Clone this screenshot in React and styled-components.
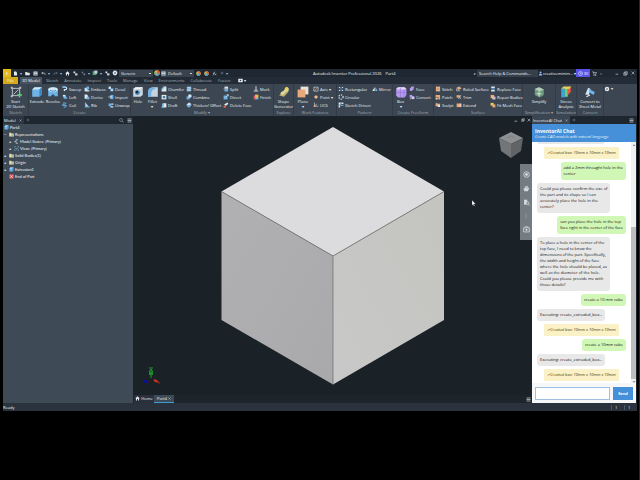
import React from "react";
import styled, { createGlobalStyle } from "styled-components";

const GlobalStyle = createGlobalStyle`
  * { box-sizing: border-box; }
  body { margin: 0; background: #000; }
  button, input, select { font: inherit; color: inherit; margin: 0; padding: 0; border: 0; background: none; outline: 0; }
  ul { margin: 0; padding: 0; list-style: none; }
`;

/* ---------- icons ---------- */

const B = "#6fb4e8";
const L = "#cfe6f7";
const W = "#e3e8ec";
const O = "#e8a878";
const P = "#b79af0";

const shapes = {
  sketch: <><path d="M4 4h12v12H4z" fill="none" stroke={W} strokeWidth="1.2" /><path d="M1 3h4M3 1v4M15 3h4M17 1v4M1 17h4M3 15v4M6 14l8-8" stroke={W} strokeWidth="1.2" /><path d="M16 11v8M12 15h8" stroke="#5fd07a" strokeWidth="2.4" /></>,
  extrude: <><path d="M2 6 6 2h12v12l-4 4H2z" fill={B} /><path d="M2 6 6 2h12l-4 4z" fill={L} /><path d="M14 6l4-4v12l-4 4z" fill="#3d85bd" /></>,
  revolve: <><path d="M2 8c0-8 16-8 16 0v9h-5c0-4-6-4-6 0H2z" fill={B} /><ellipse cx="10" cy="6" rx="8" ry="4" fill={L} /><path d="M5 7c2 2 8 2 10 0" stroke="#3d85bd" strokeWidth="1.5" fill="none" /></>,
  sweep: <><path d="M2 4h9c6 0 6 8 0 8H8v5" stroke={L} strokeWidth="4" fill="none" /><path d="M2 4h9" stroke={B} strokeWidth="5" /></>,
  loft: <><path d="M3 3h8l7 13H6z" fill={B} /><path d="M3 3h8v5H3z" fill={L} /></>,
  coil: <path d="M3 4c12-4 14 3 3 4s-3 6 4 4 8 3-4 6" stroke={B} strokeWidth="3" fill="none" />,
  emboss: <><path d="M2 6h10v12H2z" fill={L} /><path d="M8 2h9v9H8z" fill={B} /><path d="M10 14h8v4h-8z" fill={W} /></>,
  derive: <><path d="M2 2h8l3 4v10H2z" fill={W} /><path d="M9 9h9v9H9z" fill={B} /></>,
  rib: <><path d="M3 2h4v12h11v4H3z" fill={B} /><path d="M7 5l8 9H7z" fill={L} /></>,
  decal: <><path d="M2 2h8v8H2z" fill={L} /><path d="M8 8h10v10H8z" fill={B} /><circle cx="13" cy="13" r="3" fill={W} /></>,
  import: <><path d="M8 3h10v14H8z" fill={B} /><path d="M1 10h10M8 6l4 4-4 4" stroke={W} strokeWidth="2.4" fill="none" /></>,
  unwrap: <><path d="M2 5h9v9H2z" fill={B} /><path d="M11 5h7v4h-7zM8 14h10v4H8z" fill={L} /></>,
  hole: <><path d="M2 5 6 2h12v13l-4 3H2z" fill="#c9d3db" /><path d="M2 5 6 2h12l-4 3z" fill="#f1f4f6" /><circle cx="9" cy="11" r="4" fill="#3b83bb" /><circle cx="8" cy="10" r="2" fill="#16222d" /></>,
  fillet: <><path d="M2 18V9c0-6 7-7 9-7h7v16z" fill="#c9d3db" /><path d="M2 10c0-6 5-8 9-8l4 3c-5 0-8 3-8 8v5H2z" fill={B} /></>,
  chamfer: <><path d="M2 18V9l7-7h9v16z" fill={W} /><path d="M2 10l8-8h4L5 13z" fill={B} /></>,
  shell: <><path d="M2 3h16v15H2z" fill={W} /><path d="M6 7h8v7H6z" fill="#2f79b1" /></>,
  draft: <><path d="M2 18 6 4h12v14z" fill={W} /><path d="M2 18 6 4h4L8 18z" fill={B} /></>,
  thread: <><path d="M4 2h12v16H4z" fill={B} /><path d="M2 6l16-2M2 11l16-2M2 16l16-2" stroke={W} strokeWidth="2" /></>,
  combine: <><path d="M2 8h10v10H2z" fill={B} /><circle cx="13" cy="7" r="6" fill={L} /></>,
  thicken: <><path d="M2 8 10 2l8 5-8 6z" fill={L} /><path d="M2 8l8 5 8-6v5l-8 7-8-6z" fill={B} /></>,
  split: <><path d="M5 2h12v7H5z" fill={L} /><path d="M5 11h12v7H5z" fill={B} /><path d="M1 10h18" stroke={W} strokeWidth="1.4" /></>,
  direct: <><path d="M2 5h13v13H2z" fill={B} /><path d="M9 11l8-8M12 2h6v6" stroke={W} strokeWidth="2.2" fill="none" /></>,
  deleteface: <><path d="M4 8 14 2l4 4-9 7z" fill={W} /><path d="M2 12l7 1v6H2z" fill="#e0674b" /></>,
  mark: <><path d="M10 1v13" stroke={W} strokeWidth="3" /><path d="M2 17h16M6 12l4 4 4-4" stroke={W} strokeWidth="2.4" fill="none" /></>,
  finish: <><path d="M2 5h9v13H2z" fill="#db5454" /><path d="M7 2h11v11H7z" fill="#edb84c" /><path d="M8 13h10v5H8z" fill={B} /></>,
  shape: <><path d="M2 16 11 6l7 3-8 9z" fill="#b9b069" /><path d="M4 13c2-6 5-2 7-7s6-5 7-1-3 3-6 6-3 6-8 2z" fill="#dfd79c" /><circle cx="14" cy="4" r="2.5" fill="#f0d44a" /></>,
  plane: <><path d="M6 1h13v13H6z" fill="#e9e1db" /><path d="M1 6h13v13H1z" fill={O} /></>,
  axis: <><path d="M3 4h14v13H3z" fill="none" stroke={W} strokeWidth="2" /><path d="M5 16 16 4" stroke={O} strokeWidth="2.4" /></>,
  point: <><path d="M10 3l7 7-7 7-7-7z" fill={O} /><circle cx="10" cy="10" r="2" fill="#fff" /></>,
  ucs: <><path d="M5 2v12h13M5 14l8-8" stroke={W} strokeWidth="2" fill="none" /><circle cx="5" cy="14" r="3" fill={O} /></>,
  rect: <><path d="M3 3h4v4H3zM13 3h4v4h-4zM3 13h4v4H3zM13 13h4v4h-4z" fill={L} /><path d="M10 3v14M3 10h14" stroke={B} strokeWidth="2" strokeDasharray="2 2" /></>,
  circ: <circle cx="10" cy="10" r="7" fill="none" stroke={L} strokeWidth="4" strokeDasharray="4 3.3" />,
  driven: <><path d="M2 2h7v7H2zM11 2h7v5h-7zM2 11h5v7H2z" fill={L} /><path d="M9 9h4v4H9zM14 9h4v4h-4z" fill={B} /></>,
  mirror: <><path d="M9 3v14H1z" fill={W} /><path d="M11 3v14h8z" fill={B} /></>,
  box: <><path d="M2 5 5 2h11l3 3v10l-3 4H5l-3-3z" fill={P} /><path d="M2 5 5 2h11l3 3-4 1H4z" fill="#e2d5fb" /><path d="M9 3v16M15 6v12M2 11h17" stroke="#8f70d2" strokeWidth="1" /></>,
  face: <path d="M3 8 9 2h8l-2 9-6 6H3z" fill={P} />,
  convert: <><path d="M2 3h9v9H2z" fill={P} /><path d="M9 8h9v9H9z" fill="#dccdfb" /><path d="M3 16h5" stroke={W} strokeWidth="2.4" /></>,
  stitch: <><path d="M3 2h6v16H3zM11 2h6v16h-6z" fill={O} /><path d="M7 5h6M7 10h6M7 15h6" stroke="#fff" strokeWidth="1.6" /></>,
  patch: <><path d="M2 3h15v15h-6V10H2z" fill={O} /><path d="M2 12h7v6H2z" fill="#f7d6bd" /></>,
  sculpt: <><path d="M2 5c6-6 8 4 15 0v9c-6 5-9-3-15 2z" fill={O} /><circle cx="13" cy="13" r="4" fill={L} /></>,
  ruled: <><path d="M2 5 13 2l5 7-11 4z" fill={O} /><path d="M2 8v8h12" stroke={W} strokeWidth="2" fill="none" /></>,
  trim: <><path d="M2 4h9v8H2z" fill={O} /><path d="M8 17 17 3M10 4l6 13" stroke={W} strokeWidth="2" /></>,
  extend: <><path d="M2 5h9v12H2z" fill={O} /><path d="M11 5h7v12h-7z" fill="#f7d6bd" /></>,
  replace: <><path d="M4 2h12v5H4zM4 13h12v5H4z" fill={L} /><path d="M4 8h12v4H4z" fill={B} /></>,
  repair: <><path d="M2 3h12v11H2z" fill={O} /><path d="M8 9h10v9H8z" fill={W} /><path d="M10 13h6" stroke="#d65151" strokeWidth="2.4" /></>,
  mesh: <><path d="M2 3h10v9H2z" fill="#efd04c" /><path d="M8 8h10v10H8z" fill={O} /></>,
  simplify: <><path d="M3 5l7-3 8 4v9l-7 4-8-4z" fill="#6f9b7d" /><path d="M3 5l7-3 8 4-7 3z" fill="#b4cebb" /><path d="M6 13h8M10 9v8" stroke="#d4e3d8" strokeWidth="1.6" /></>,
  stress: <><path d="M2 4h6v15H2z" fill="#39a5df" /><path d="M8 3h5v15H8z" fill="#70cf79" /><path d="M13 2h5v8l-5 5z" fill="#e85b46" /><path d="M2 4l4-3h13l-4 4z" fill="#e6d35c" /></>,
  metal: <><path d="M2 14 7 3l4 2-3 10z" fill={L} /><path d="M8 5l10 5-2 5-7-4z" fill={B} /><path d="M4 18l6-3" stroke={W} strokeWidth="2" /></>,
  gear: <circle cx="10" cy="10" r="5" fill="none" stroke={W} strokeWidth="5" />,
  file: <path d="M4 2h8l4 4v12H4z" fill={W} />,
  folder: <path d="M1 4h7l2 3h9v10H1z" fill={W} />,
  save: <><path d="M2 2h16v16H2z" fill={W} /><path d="M6 2h8v5H6zM5 11h10v7H5z" fill="#737e89" /></>,
  undo: <path d="M8 4 3 8l5 5M3 8h9c5 0 5 6 4 8" stroke={W} strokeWidth="2.4" fill="none" />,
  redo: <path d="M12 4l5 4-5 5M17 8H8c-5 0-5 6-4 8" stroke="#75808a" strokeWidth="2.4" fill="none" />,
  home: <path d="M10 1 1 10h3v8h4v-6h4v6h4v-8h3z" fill={W} />,
  parts: <><path d="M2 2h7v7H2z" fill={W} /><path d="M8 9h10v9H8z" fill="#b9c3cb" /></>,
  faded: <path d="M3 3h6v6H3zM10 10h7v7h-7z" fill="#75808a" />,
  green: <><path d="M2 4h13v13H2z" fill="#5f987e" /><path d="M8 2h10v10H8z" fill="#bed8cb" /></>,
  ball: <><circle cx="10" cy="10" r="8" fill={W} /><path d="M5 5l10 10M15 5 5 15" stroke="#5d6974" strokeWidth="2" /></>,
  wheel: <><circle cx="10" cy="10" r="9" fill="#e9b940" /><path d="M10 10V1a9 9 0 0 1 8 13z" fill="#dd5252" /><path d="M10 10l8 4a9 9 0 0 1-14 2z" fill="#4aa5e3" /><path d="M10 10 4 16A9 9 0 0 1 3 5z" fill="#68b967" /></>,
  plus: <path d="M10 3v14M3 10h14" stroke="#a4aeb6" strokeWidth="2" />,
  fx: <><path d="M3 18c5 1 3-15 9-15M4 9h7" stroke={W} strokeWidth="2" fill="none" /><path d="M11 10l6 7M17 10l-6 7" stroke={W} strokeWidth="1.8" /></>,
  user: <><circle cx="10" cy="6" r="4" fill="#9cb5ef" /><path d="M3 18c0-9 14-9 14 0z" fill="#9cb5ef" /></>,
  cart: <><path d="M1 3h4l2 10h9l2-7H6" stroke={W} strokeWidth="2" fill="none" /><circle cx="8" cy="17" r="2" fill={W} /><circle cx="15" cy="17" r="2" fill={W} /></>,
  min: <path d="M3 16h13" stroke={W} strokeWidth="3" />,
  restore: <path d="M7 3h10v10H7zM3 7h10v10H3z" stroke={W} strokeWidth="2" fill="none" />,
  close: <path d="M3 3l14 14M17 3 3 17" stroke={W} strokeWidth="2.6" />,
  menu: <path d="M2 4h16M2 10h16M2 16h16" stroke={W} strokeWidth="2.6" />,
  search: <><circle cx="8" cy="8" r="6" fill="none" stroke="#aab4bc" strokeWidth="2" /><path d="M12 12l7 7" stroke="#aab4bc" strokeWidth="2" /></>,
  clock: <><circle cx="10" cy="10" r="8" fill="none" stroke="#fff" strokeWidth="2" /><path d="M10 5v6h5" stroke="#fff" strokeWidth="2" fill="none" /></>,
  media: <><path d="M1 3h18v14H1z" fill={W} /><circle cx="10" cy="10" r="3" fill="#39444f" /></>,
  states: <><path d="M8 3v14M8 3h8M8 17h8M2 10h6" stroke={W} strokeWidth="2.4" /><circle cx="5" cy="10" r="3" fill={B} /></>,
  view: <><path d="M2 7V2h5M13 2h5v5M18 13v5h-5M7 18H2v-5" stroke={B} strokeWidth="2" fill="none" /><path d="M6 8l4 5 4-5" stroke={W} strokeWidth="2" fill="none" /></>,
  yfolder: <><path d="M1 3h7l2 3h9v12H1z" fill="#e8dfae" /><path d="M9 9h8v7H9z" fill="#a3b99c" /></>,
  end: <><rect x="1" y="1" width="18" height="18" rx="4" fill="#e05858" /><path d="M6 6l8 8M14 6l-8 8" stroke="#fff" strokeWidth="3" /></>,
  orbit: <><circle cx="10" cy="10" r="8" fill="none" stroke="#d6dade" strokeWidth="2.4" /><circle cx="10" cy="10" r="4" fill="#d6dade" /></>,
  hand: <path d="M4 18 1 10l2-1 2 3V4h2v6l1-8h2v8l2-7h2l-1 8 3-4 2 1-4 10z" fill="#d6dade" />,
  zoomdoc: <><path d="M3 2h9v14H3z" fill="#d6dade" /><circle cx="13" cy="12" r="4" fill="#848c92" stroke="#d6dade" strokeWidth="2" /><path d="M16 15l3 4" stroke="#d6dade" strokeWidth="2" /></>,
  look: <path d="M10 3v14M5 8l5-5 5 5M5 12l5 5 5-5" stroke="#8f979d" strokeWidth="2" fill="none" />,
  camera: <><path d="M2 5h16v12H2z" fill="none" stroke="#d6dade" strokeWidth="2.4" /><circle cx="10" cy="11" r="3" fill="#d6dade" /><path d="M5 2h10" stroke="#d6dade" strokeWidth="2" /></>,
};

const Svg = styled.svg`
  width: ${(p) => p.$size}px;
  height: ${(p) => p.$size}px;
  flex: none;
  display: block;
`;

function Icon({ name, size = 6 }) {
  return (
    <Svg $size={size} viewBox="0 0 20 20" aria-hidden="true">
      {shapes[name]}
    </Svg>
  );
}

/* ---------- data ---------- */

const tabs = ["Sketch", "Annotate", "Inspect", "Tools", "Manage", "View", "Environments", "Collaborate", "Fusion"];

const groups = [
  { label: "Sketch", width: 26, big: [["sketch", "Start\n2D Sketch", 25]] },
  {
    label: "Create", width: 102,
    big: [["extrude", "Extrude", 16], ["revolve", "Revolve", 16]],
    cols: [
      [22, ["sweep", "Sweep"], ["loft", "Loft"], ["coil", "Coil"]],
      [24, ["emboss", "Emboss"], ["derive", "Derive"], ["rib", "Rib"]],
      [23, ["decal", "Decal"], ["import", "Import"], ["unwrap", "Unwrap"]],
    ],
  },
  {
    label: "Modify ▾", width: 143,
    big: [["hole", "Hole", 14], ["fillet", "Fillet\n▾", 15]],
    cols: [
      [25, ["chamfer", "Chamfer"], ["shell", "Shell"], ["draft", "Draft"]],
      [37, ["thread", "Thread"], ["combine", "Combine"], ["thicken", "Thicken/ Offset"]],
      [30, ["split", "Split"], ["direct", "Direct"], ["deleteface", "Delete Face"]],
      [21, ["mark", "Mark"], ["finish", "Finish"]],
    ],
  },
  { label: "Explore", width: 20, big: [["shape", "Shape\nGenerator", 19]] },
  {
    label: "Work Features", width: 43,
    big: [["plane", "Plane\n▾", 18]],
    cols: [[24, ["axis", "Axis ▾"], ["point", "Point ▾"], ["ucs", "UCS"]]],
  },
  {
    label: "Pattern", width: 56,
    cols: [
      [34, ["rect", "Rectangular"], ["circ", "Circular"], ["driven", "Sketch Driven"]],
      [21, ["mirror", "Mirror"]],
    ],
  },
  {
    label: "Create Freeform", width: 41,
    big: [["box", "Box\n▾", 15]],
    cols: [[25, ["face", "Face"], ["convert", "Convert"]]],
  },
  {
    label: "Surface", width: 89,
    cols: [
      [21, ["stitch", "Stitch"], ["patch", "Patch"], ["sculpt", "Sculpt"]],
      [34, ["ruled", "Ruled Surface"], ["trim", "Trim"], ["extend", "Extend"]],
      [33, ["replace", "Replace Face"], ["repair", "Repair Bodies"], ["mesh", "Fit Mesh Face"]],
    ],
  },
  { label: "Simplification ▾", width: 33, big: [["simplify", "Simplify", 32]] },
  { label: "Simulation", width: 21, big: [["stress", "Stress\nAnalysis", 20]] },
  { label: "Convert", width: 27, big: [["metal", "Convert to\nSheet Metal", 26]] },
];

const tree = [
  { depth: 0, icon: "extrude", text: "Part4" },
  { depth: 0, icon: "yfolder", text: "Representations", mark: "−" },
  { depth: 1, icon: "states", text: "Model States: [Primary]", mark: "+" },
  { depth: 1, icon: "view", text: "View: [Primary]", mark: "+" },
  { depth: 0, icon: "yfolder", text: "Solid Bodies(1)", mark: "+" },
  { depth: 0, icon: "yfolder", text: "Origin", mark: "+" },
  { depth: 0, icon: "extrude", text: "Extrusion1", mark: "+" },
  { depth: 0, icon: "end", text: "End of Part", mark: " " },
];

const done = "✓Created box: 10mm x 10mm x 10mm";
const messages = [
  ["bot", ""],
  ["done", done],
  ["user", "add a 2mm throught hole in the\ncenter"],
  ["bot", "Could you please confirm the size of\nthe part and its shape so I can\naccurately place the hole in the\ncenter?"],
  ["user", "can you place the hole in the top\nface right in the center of the face"],
  ["bot", "To place a hole in the center of the\ntop face, I need to know the\ndimensions of the part. Specifically,\nthe width and height of the face\nwhere the hole should be placed, as\nwell as the diameter of the hole.\nCould you please provide me with\nthose details?"],
  ["user", "create a 10 mm cube"],
  ["bot", "Executing: create_extruded_box..."],
  ["done", done],
  ["user", "create a 10mm cube"],
  ["bot", "Executing: create_extruded_box..."],
  ["done", done],
];

/* ---------- app ---------- */

function TitleBar() {
  return (
    <TitleRow>
      <Quick>
        <Logo aria-label="Inventor">I</Logo>
        <Bare $w={8} aria-label="New"><Icon name="file" size={5} /></Bare>
        <Caret>▾</Caret>
        <Bare $w={8} aria-label="Open"><Icon name="folder" size={5} /></Bare>
        <Bare $w={8} aria-label="Save"><Icon name="save" size={5} /></Bare>
        <Bare $w={8} aria-label="Undo"><Icon name="undo" size={5} /></Bare>
        <Caret>▾</Caret>
        <Bare $w={8} aria-label="Redo"><Icon name="redo" size={5} /></Bare>
        <Caret>▾</Caret>
        <Bare $w={8} aria-label="Home"><Icon name="home" size={5} /></Bare>
        <Bare $w={8} aria-label="Parts"><Icon name="parts" size={5} /></Bare>
        <Bare $w={8} aria-label="Select"><Icon name="faded" size={5} /></Bare>
        <Caret>▾</Caret>
        <Bare $w={8} aria-label="Update"><Icon name="green" /></Bare>
        <Caret>▾</Caret>
        <Bare $w={8} aria-label="Team"><Icon name="parts" size={5} /></Bare>
        <Bare $w={8} aria-label="Material"><Icon name="ball" /></Bare>
        <Select aria-label="Material" defaultValue="Generic"><option>Generic</option></Select>
        <Bare $w={8} aria-label="Appearance"><Icon name="wheel" /></Bare>
        <Look>
          <Icon name="save" size={5} />
          <Select $narrow aria-label="Appearance" defaultValue="Default"><option>Default</option></Select>
        </Look>
        <Bare $w={8} aria-label="Adjust"><Icon name="wheel" size={5} /></Bare>
        <Bare $w={8} aria-label="Clear"><Icon name="wheel" size={5} /></Bare>
        <Bare $w={8} aria-label="Parameters"><Icon name="fx" size={5} /></Bare>
        <Bare $w={7} aria-label="Add"><Icon name="plus" size={4} /></Bare>
        <Caret>▾</Caret>
      </Quick>
      <DocTitle>
        <span>Autodesk Inventor Professional 2026</span>
        <span>Part4</span>
      </DocTitle>
      <Account>
        <Caret>▸</Caret>
        <Search aria-label="Search" defaultValue="Search Help & Commands..." />
        <User><Icon name="user" size={5} />creativeminim... ▾</User>
        <Trial><Icon name="clock" size={5} />30</Trial>
        <Bare $w={9} aria-label="Store"><Icon name="cart" size={5} /></Bare>
        <Caret>»</Caret>
      </Account>
      <WindowKeys>
        <Bare $w={8} aria-label="Minimize"><Icon name="min" size={4} /></Bare>
        <Bare $w={8} aria-label="Restore"><Icon name="restore" size={5} /></Bare>
        <Bare $w={8} aria-label="Close"><Icon name="close" size={4} /></Bare>
      </WindowKeys>
    </TitleRow>
  );
}

function Ribbon() {
  return (
    <RibbonRow>
      {groups.map((g) => (
        <Group key={g.label} $w={g.width}>
          <GroupBody>
            {(g.big || []).map(([icon, text, w]) => (
              <BigTool key={icon} $w={w}>
                <Icon name={icon} size={12} />
                <span>{text}</span>
              </BigTool>
            ))}
            {(g.cols || []).map(([w, ...tools]) => (
              <ToolColumn key={tools[0][0]} $w={w}>
                {tools.map(([icon, text]) => (
                  <Tool key={icon}><Icon name={icon} />{text}</Tool>
                ))}
              </ToolColumn>
            ))}
          </GroupBody>
          <GroupLabel>{g.label}</GroupLabel>
        </Group>
      ))}
      <GearKey aria-label="Ribbon options"><Icon name="gear" />▾</GearKey>
    </RibbonRow>
  );
}

function Browser() {
  return (
    <BrowserPane>
      <PaneTabs>
        <PaneTab>Model <Icon name="close" size={3} /></PaneTab>
        <Bare $w={8} aria-label="Add tab"><Icon name="plus" size={4} /></Bare>
        <Spacer />
        <Bare $w={8} aria-label="Search model"><Icon name="search" size={5} /></Bare>
        <Bare $w={8} aria-label="Model menu"><Icon name="menu" size={5} /></Bare>
      </PaneTabs>
      <Tree>
        {tree.map((n) => (
          <Node key={n.text} $depth={n.depth}>
            {n.mark && <Mark>{n.mark}</Mark>}
            <Icon name={n.icon} size={5} />
            {n.text}
          </Node>
        ))}
      </Tree>
    </BrowserPane>
  );
}

function Viewport() {
  return (
    <Canvas>
      <Scene>
        <CubeSvg viewBox="0 0 224 258" role="img" aria-label="Cube">
          <defs>
            <linearGradient id="left" x1="0" y1="0" x2="1" y2="1">
              <stop offset="0" stopColor="#b1b0b2" />
              <stop offset="1" stopColor="#a9a8aa" />
            </linearGradient>
            <linearGradient id="right" x1="1" y1="0" x2="0" y2="1">
              <stop offset="0" stopColor="#c4c5c0" />
              <stop offset="1" stopColor="#c8c8c8" />
            </linearGradient>
          </defs>
          <path d="M112 0 223 64.500 112 129 .5 64.500z" fill="#dcdbdd" />
          <path d="M.5 64.500 112 129v128.500L.5 193z" fill="url(#left)" />
          <path d="M223 64.500 112 129v128.500L223 193z" fill="url(#right)" />
          <path d="M.5 64.500 112 129v128.500M112 129 223 64.500" fill="none" stroke="#6b6e6a" strokeWidth=".7" />
        </CubeSvg>
      </Scene>
      <DocKeys>
        <Bare $w={7} aria-label="Minimize view"><Icon name="min" size={4} /></Bare>
        <Bare $w={7} aria-label="Restore view"><Icon name="restore" size={4} /></Bare>
        <Bare $w={6} aria-label="Close view"><Icon name="close" size={4} /></Bare>
      </DocKeys>
      <ViewCube viewBox="0 0 24 26">
        <path d="M12 0 24 6 12 12 0 6z" fill="#8d9091" />
        <path d="M0 6l12 6v14L2 19z" fill="#737678" />
        <path d="M24 6 12 12v14l10-7z" fill="#606466" />
        <path d="M8 6l4-2 4 2" stroke="#7b7f81" strokeWidth=".8" fill="none" />
      </ViewCube>
      <NavBar>
        <Bare $w={11} aria-label="Wheel"><Icon name="orbit" size={7} /></Bare>
        <Bare $w={11} aria-label="Pan"><Icon name="hand" size={7} /></Bare>
        <Bare $w={11} aria-label="Zoom"><Icon name="zoomdoc" size={7} /></Bare>
        <Bare $w={11} aria-label="Look"><Icon name="look" size={6} /></Bare>
        <Bare $w={11} aria-label="Camera"><Icon name="camera" size={7} /></Bare>
      </NavBar>
      <Triad viewBox="0 0 18 20">
        <path d="M9 11V3M7 5l2-3 2 3M7 1h4" stroke="#1f9a35" strokeWidth="1" fill="none" />
        <path d="M7 5h4v3H7z" fill="#1d8a30" />
        <path d="M2 13h4v3H2z" fill="#10108f" />
        <path d="M12 13l4 2" stroke="#d33327" strokeWidth="2" />
        <path d="M15 15l3 1" stroke="#8a1e1a" strokeWidth="1.500" />
      </Triad>
      <Pointer viewBox="0 0 10 16">
        <path d="M0 0v13l3-3 2 5 2-1-2-5h4z" fill="#fff" stroke="#222" strokeWidth=".6" />
      </Pointer>
      <DocTabs>
        <DocTab><Icon name="home" size={5} />Home</DocTab>
        <DocTab $active>Part4 <Icon name="close" size={3} /></DocTab>
        <Spacer />
        <Bare $w={8} aria-label="Document list"><Icon name="menu" size={5} /></Bare>
      </DocTabs>
    </Canvas>
  );
}

function Chat() {
  return (
    <ChatPane>
      <PaneTabs>
        <PaneTab $blue>InventorAI Chat <Icon name="close" size={3} /></PaneTab>
        <Bare $w={8} aria-label="Add panel"><Icon name="plus" size={4} /></Bare>
        <Spacer />
        <Bare $w={9} aria-label="Panel menu"><Icon name="menu" size={5} /></Bare>
      </PaneTabs>
      <ChatHead>
        <ChatTitle>InventorAI Chat</ChatTitle>
        <ChatSub>Create CAD models with natural language</ChatSub>
      </ChatHead>
      <ChatScroll>
        <Messages>
          {messages.map(([kind, text], i) => (
            <Bubble key={i} $kind={kind}>{text}</Bubble>
          ))}
        </Messages>
        <Track>
          <Arrow>▴</Arrow>
          <Thumb />
          <Arrow>▾</Arrow>
        </Track>
      </ChatScroll>
      <ChatForm onSubmit={(e) => e.preventDefault()}>
        <ChatInput aria-label="Message" />
        <Send type="submit">Send</Send>
      </ChatForm>
    </ChatPane>
  );
}

export default function App() {
  return (
    <Screen>
      <GlobalStyle />
      <Window>
        <TitleBar />
        <TabRow>
          <FileTab>File</FileTab>
          <Tab $active>3D Model</Tab>
          {tabs.map((t) => <Tab key={t}>{t}</Tab>)}
          <MediaKey aria-label="Media"><Icon name="media" size={5} />▾</MediaKey>
        </TabRow>
        <Ribbon />
        <Work>
          <Browser />
          <Viewport />
          <Chat />
        </Work>
        <StatusBar>
          <span>Ready</span>
          <Spacer />
          <Count>1</Count>
          <Count>1</Count>
        </StatusBar>
      </Window>
    </Screen>
  );
}

/* ---------- styles ---------- */

const Screen = styled.div`
  height: 100vh;
  padding: 69px 2px 69px 3px;
  border-right: 1px solid #0d3a12;
  background: #000;
  font-family: "Open Sans", "Noto Sans", sans-serif;
  font-size: 4px;
  line-height: 5px;
  color: #f2f5f7;
`;

const Window = styled.div`
  height: 100%;
  display: flex;
  flex-direction: column;
  background: #1f2730;
  overflow: hidden;
  white-space: nowrap;
`;

const Bare = styled.button`
  width: ${(p) => p.$w}px;
  flex: none;
  display: flex;
  align-items: center;
  justify-content: center;
`;

const Spacer = styled.div`
  flex: 1;
`;

const Caret = styled.span`
  width: 4px;
  text-align: center;
  color: #b4bcc3;
`;

const TitleRow = styled.header`
  height: 8px;
  flex: none;
  display: flex;
  align-items: center;
  background: #1f2832;
`;

const Quick = styled.div`
  flex: none;
  display: flex;
  align-items: center;
  width: 304px;
`;

const Logo = styled.button`
  width: 8px;
  height: 8px;
  background: #e3b91f;
  color: #fff;
  font-weight: 700;
`;

const Select = styled.select`
  appearance: none;
  width: ${(p) => (p.$narrow ? 28 : 34)}px;
  height: 7px;
  padding-left: 2px;
  background: linear-gradient(#cfd5da, #cfd5da) right 2px center / 2px 1px no-repeat #38434e;
`;

const Look = styled.div`
  display: flex;
  align-items: center;
  background: #38434e;
`;

const DocTitle = styled.div`
  flex: 1;
  display: flex;
  gap: 4px;
  padding-left: 6px;
`;

const Account = styled.div`
  flex: none;
  display: flex;
  align-items: center;
`;

const Search = styled.input`
  width: 61px;
  height: 7px;
  padding-left: 2px;
  background: #35404b;
`;

const User = styled.button`
  width: 38px;
  height: 8px;
  display: flex;
  align-items: center;
`;

const Trial = styled.button`
  width: 14px;
  height: 8px;
  display: flex;
  align-items: center;
  justify-content: center;
  gap: 1px;
  background: #5a54e6;
  color: #fff;
`;

const WindowKeys = styled.div`
  flex: none;
  width: 34px;
  display: flex;
  justify-content: flex-end;
`;

const TabRow = styled.nav`
  height: 7px;
  flex: none;
  display: flex;
  gap: 2px;
  background: #232c36;
`;

const Tab = styled.button`
  padding: 0 2px;
  background: ${(p) => (p.$active ? "#46525f" : "none")};
  color: ${(p) => (p.$active ? "#f2f5f7" : "#a9b2ba")};
`;

const FileTab = styled(Tab)`
  width: 15px;
  background: #d5a91c;
  color: #fff;
`;

const MediaKey = styled.button`
  display: flex;
  align-items: center;
  gap: 1px;
  padding-left: 4px;
`;

const RibbonRow = styled.div`
  height: 32px;
  flex: none;
  display: flex;
  background: #3b4652;
`;

const Group = styled.section`
  flex: 0 0 ${(p) => p.$w}px;
  display: flex;
  flex-direction: column;
  border-right: 1px solid #323c47;
`;

const GroupBody = styled.div`
  flex: 1;
  display: flex;
  padding-top: 1px;
`;

const GroupLabel = styled.div`
  height: 6px;
  text-align: center;
  color: #a3adb6;
`;

const BigTool = styled.button`
  width: ${(p) => p.$w}px;
  flex: none;
  display: flex;
  flex-direction: column;
  align-items: center;
  justify-content: flex-start;
  gap: 1px;
  padding-top: 1px;
  white-space: pre;
`;

const ToolColumn = styled.div`
  width: ${(p) => p.$w}px;
  flex: none;
`;

const Tool = styled.button`
  height: 8px;
  display: flex;
  align-items: center;
  gap: 1px;
  padding-left: 1px;
  white-space: pre;
`;

const GearKey = styled.button`
  display: flex;
  gap: 1px;
  padding-top: 2px;
`;

const Work = styled.main`
  flex: 1;
  min-height: 0;
  display: flex;
`;

const BrowserPane = styled.aside`
  width: 130px;
  flex: none;
  display: flex;
  flex-direction: column;
  background: #3e4a55;
`;

const PaneTabs = styled.div`
  height: 8px;
  flex: none;
  display: flex;
  background: #1e2630;
`;

const PaneTab = styled.button`
  display: flex;
  align-items: center;
  gap: 3px;
  padding: 0 2px 0 1px;
  background: ${(p) => (p.$blue ? "#3a4653" : "#2c3641")};
`;

const Tree = styled.ul`
  font-family: Lato, "Liberation Sans", sans-serif;
`;

const Node = styled.li`
  height: 7px;
  display: flex;
  align-items: center;
  gap: 1px;
  padding-left: ${(p) => p.$depth * 5 + 1}px;
`;

const Mark = styled.span`
  width: 4px;
  font-weight: 700;
  white-space: pre;
`;

const Canvas = styled.section`
  position: relative;
  flex: 1;
  min-width: 0;
  display: flex;
  flex-direction: column;
  background: #1a2127;
`;

const Scene = styled.div`
  flex: 1;
  min-height: 0;
  display: flex;
  align-items: center;
  justify-content: center;
`;

const CubeSvg = styled.svg`
  width: 224px;
  height: 258px;
`;

const DocKeys = styled.div`
  position: absolute;
  top: 2px;
  right: 0;
  display: flex;
`;

const ViewCube = styled.svg`
  position: absolute;
  top: 16px;
  right: 9px;
  width: 24px;
  height: 26px;
`;

const NavBar = styled.div`
  position: absolute;
  top: 48px;
  right: 0;
  width: 12px;
  height: 76px;
  display: flex;
  flex-direction: column;
  align-items: center;
  justify-content: space-evenly;
  background: #747c83;
`;

const Triad = styled.svg`
  position: absolute;
  left: 9px;
  bottom: 16px;
  width: 18px;
  height: 20px;
`;

const Pointer = styled.svg`
  position: absolute;
  left: 339px;
  top: 84px;
  width: 4px;
  height: 7px;
`;

const DocTabs = styled.div`
  height: 8px;
  flex: none;
  display: flex;
  padding-left: 1px;
  background: #1d242c;
`;

const DocTab = styled.button`
  width: 20px;
  display: flex;
  align-items: center;
  justify-content: center;
  gap: 1px;
  background: ${(p) => (p.$active ? "#3d4a58" : "#28313b")};
  border-bottom: 1px solid ${(p) => (p.$active ? "#3f9bd0" : "#28313b")};
`;

const ChatPane = styled.aside`
  width: 105px;
  flex: none;
  display: flex;
  flex-direction: column;
  padding-right: 1px;
  color: #111;

  ${PaneTabs} {
    color: #f2f5f7;
  }
`;

const ChatHead = styled.header`
  height: 18px;
  flex: none;
  padding: 4px 3px 0;
  background: #4590d8;
  color: #fff;
`;

const ChatTitle = styled.div`
  font-size: 5px;
  line-height: 6px;
  font-weight: 700;
`;

const ChatSub = styled.div`
  font-style: italic;
  color: #e4f0fb;
`;

const ChatScroll = styled.div`
  flex: 1;
  min-height: 0;
  display: flex;
  background: #fff;
`;

const Messages = styled.div`
  flex: 1;
  min-width: 0;
  display: flex;
  flex-direction: column;
  justify-content: flex-end;
  gap: 3px;
  padding: 0 5px 2px;
  overflow: hidden;
`;

const fills = { bot: "#e8e8e8", user: "#d0f7b6", done: "#fbf1c6" };
const sides = { bot: "flex-start", user: "flex-end", done: "center" };

const Bubble = styled.div`
  flex: none;
  align-self: ${(p) => sides[p.$kind]};
  min-width: ${(p) => (p.$kind === "bot" ? 68 : 0)}px;
  padding: 3px;
  line-height: 6px;
  white-space: pre;
  border-radius: ${(p) => (p.$kind === "done" ? 1 : 3)}px;
  background: ${(p) => fills[p.$kind]};
  font-style: ${(p) => (p.$kind === "done" ? "italic" : "normal")};
  color: ${(p) => (p.$kind === "done" ? "#463f14" : "#111")};
`;

const Track = styled.div`
  width: 5px;
  display: flex;
  flex-direction: column;
  justify-content: flex-end;
  background: #f0f0f0;
`;

const Thumb = styled.div`
  height: 63%;
  background: #bdbdbd;
`;

const Arrow = styled.span`
  height: 4px;
  text-align: center;
  color: #777;

  &:first-child {
    margin-bottom: auto;
  }
`;

const ChatForm = styled.form`
  height: 20px;
  flex: none;
  display: flex;
  gap: 3px;
  padding: 4px 3px 3px;
  background: #f5f7f9;
`;

const ChatInput = styled.input`
  flex: 1;
  min-width: 0;
  border: 1px solid #9fc0e2;
  background: #fff;
`;

const Send = styled.button`
  width: 20px;
  background: #4590d8;
  color: #fff;
  font-weight: 700;
`;

const StatusBar = styled.footer`
  height: 8px;
  flex: none;
  display: flex;
  align-items: center;
  background: #29323d;
`;

const Count = styled.span`
  width: 13px;
  padding-left: 3px;
  border-left: 1px solid #4d5863;
`;
